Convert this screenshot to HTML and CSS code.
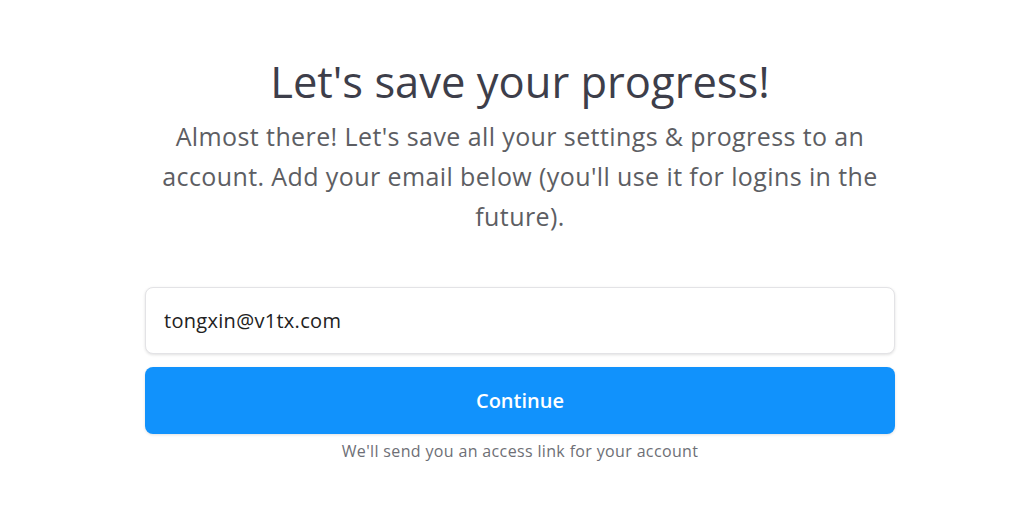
FILE: index.html
```html
<!DOCTYPE html>
<html>
<head>
<meta charset="utf-8">
<link rel="stylesheet" href="styles.css">
</head>
<body>
<main class="page">
  <h1 class="title">Let's save your progress!</h1>
  <p class="lead">Almost there! Let's save all your settings &amp; progress to an account. Add your email below (you'll use it for logins in the future).</p>
  <form class="form">
    <input class="email" type="email" value="tongxin@v1tx.com">
    <button class="btn" type="button">Continue</button>
    <p class="hint">We'll send you an access link for your account</p>
  </form>
</main>
</body>
</html>
```
FILE: styles.css
```css
html, body { margin: 0; padding: 0; background: #fff; }
body { font-family: "Open Sans", "Noto Sans", sans-serif; }
.page {
  display: flex;
  flex-direction: column;
  align-items: center;
  padding-top: 52px;
  padding-left: 22px;
}
.title {
  margin: 0;
  font-size: 43.5px;
  font-weight: 400;
  line-height: 60px;
  color: #3d3e4a;
}
.lead {
  margin: 4px 0 0;
  width: 740px;
  text-align: center;
  font-size: 25px;
  letter-spacing: 0.4px;
  line-height: 40px;
  color: #5d5e63;
}
.form {
  margin-top: 51px;
  width: 750px;
  display: flex;
  flex-direction: column;
}
.email {
  box-sizing: border-box;
  height: 67px;
  border: 1px solid #e3e3e6;
  border-radius: 8px;
  padding: 0 18px;
  font: 20px "Open Sans", sans-serif;
  letter-spacing: 0.3px;
  color: #222;
  box-shadow: 0 1px 3px rgba(0,0,0,0.12);
  outline: none;
}
.btn {
  margin-top: 13px;
  height: 67px;
  border: none;
  border-radius: 8px;
  background: #1192fc;
  color: #fff;
  font: 600 20px "Open Sans", sans-serif;
  box-shadow: 0 1px 3px rgba(0,0,0,0.12);
}
.hint {
  margin: 6px 0 0;
  text-align: center;
  font-size: 16px;
  letter-spacing: 0.35px;
  line-height: 22px;
  color: #6e6f76;
}
```
